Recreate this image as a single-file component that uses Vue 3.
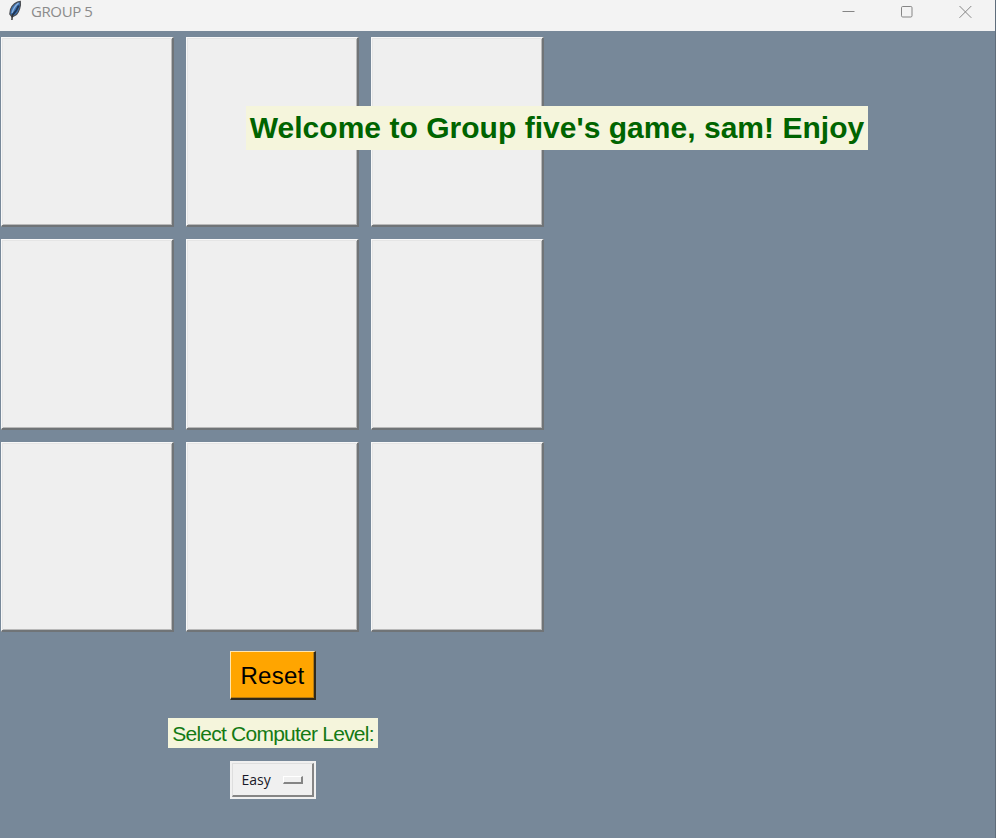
<script setup>
import { ref } from 'vue'

const cells = ref(Array(9).fill(''))
const level = ref('Easy')
const reset = () => cells.value.fill('')
</script>

<template>
  <div class="window">
    <header class="titlebar">
      <svg class="feather" width="14" height="22" viewBox="0 0 14 22">
        <path d="M12.300 1.300C8.500 1.500 4 5 2.500 9.500L1.800 14L4.100 17L8.500 14.500C11.300 11.500 13 5.500 12.300 1.300Z" fill="#3f74b5" stroke="#4a4c50" stroke-width="1.200" />
        <path d="M10.500 3C7.500 5.500 5.200 9 4 13" fill="none" stroke="#8fb4dc" stroke-width="1.300" />
        <path d="M10.800 5.500C9.500 9 7.500 12 4.500 15" fill="none" stroke="#1f3553" stroke-width="1.900" />
        <path d="M4.400 14L3.900 20" stroke="#333" stroke-width="1.400" />
      </svg>
      <span class="title">GROUP 5</span>
      <div class="controls">
        <svg width="14" height="14" viewBox="0 0 14 14"><path d="M1.500 6.500H13.500" /></svg>
        <svg width="14" height="14" viewBox="0 0 14 14"><rect x="1.500" y="1.500" width="10.500" height="10.500" rx="1.200" /></svg>
        <svg width="14" height="14" viewBox="0 0 14 14"><path d="M.5 1L12.300 12.800M12.300 1L.5 12.800" /></svg>
      </div>
    </header>
    <main class="content">
      <div class="column">
        <div class="board">
          <button v-for="(cell, i) in cells" :key="i" class="cell">{{ cell }}</button>
        </div>
        <button class="reset" @click="reset">Reset</button>
        <div class="label">Select Computer Level:</div>
        <div class="menu-ring">
          <button class="menu"><span>{{ level }}</span><i class="indicator"></i></button>
        </div>
      </div>
      <div class="welcome"><span>Welcome to Group five's game, sam! Enjoy</span></div>
    </main>
  </div>
</template>

<style>
body {
  margin: 0;
  overflow: hidden;
}
</style>

<style scoped>
.window {
  width: 996px;
  height: 838px;
  box-sizing: border-box;
  border-right: 1px solid #5f6d7b;
  background: #778899;
  font-family: "Liberation Sans", Arial, sans-serif;
  display: flex;
  flex-direction: column;
}
.titlebar {
  height: 31px;
  background: #f3f3f3;
  display: flex;
  align-items: flex-start;
}
.feather {
  margin-left: 8px;
}
.title {
  margin-left: 9px;
  font: 15px/22px "Open Sans", "Noto Sans", sans-serif;
  letter-spacing: -0.4px;
  color: #8b8b8b;
}
.controls {
  margin: 5px 22px 0 auto;
  display: flex;
  gap: 45px;
}
.controls svg {
  fill: none;
  stroke: #858585;
  stroke-width: 1;
}
.content {
  position: relative;
  flex: 1;
}
.column {
  width: 545px;
  padding-top: 6px;
  display: flex;
  flex-direction: column;
  align-items: center;
}
button {
  box-sizing: border-box;
  margin: 0;
  padding: 0;
  border-radius: 0;
  font-family: inherit;
}
.board {
  display: grid;
  grid-template-columns: repeat(3, 173px);
  grid-template-rows: 190px 191px 190px;
  gap: 12px;
}
.cell {
  background: #efefef;
  border: 1px solid #f8f8f8;
  border-right: 2px solid #707477;
  border-bottom: 2px solid #707477;
  box-shadow: inset 1px 1px #e5e5e5, inset -1px -1px #b9b9b9;
}
.reset {
  width: 86px;
  height: 49px;
  margin-top: 19px;
  padding: 1px 0 0 1px;
  background: #ffa500;
  border: 1px solid #ffe6ae;
  border-right: 2px solid #30291b;
  border-bottom: 2px solid #30291b;
  box-shadow: inset -1px -1px #b97d10;
  font-size: 24px;
  letter-spacing: 0.25px;
  color: #000;
}
.label {
  box-sizing: border-box;
  width: 210px;
  height: 30px;
  margin: 18px 0 0 1px;
  background: #f5f5dc;
  color: #147a14;
  font-size: 21px;
  line-height: 31px;
  letter-spacing: -0.76px;
  text-align: center;
  white-space: nowrap;
}
.menu-ring {
  margin-top: 13px;
  padding: 2px;
  background: #f0f0f0;
}
.menu {
  width: 82px;
  height: 34px;
  display: flex;
  align-items: center;
  justify-content: space-between;
  padding: 0 9px;
  background: #f0f0f0;
  border: 1px solid #dedede;
  border-right: 2px solid #858585;
  border-bottom: 2px solid #858585;
  font: 14px "Open Sans", "Noto Sans", sans-serif;
  color: #181828;
}
.indicator {
  box-sizing: border-box;
  width: 20px;
  height: 8px;
  border: 1px solid #fff;
  border-right: 2px solid #858585;
  border-bottom: 2px solid #858585;
}
.welcome {
  position: absolute;
  left: 246px;
  top: 75px;
  width: 622px;
  height: 44px;
  background: #f5f5dc;
  color: #006400;
  font-size: 30px;
  font-weight: bold;
  line-height: 44px;
  letter-spacing: 0.03px;
  text-align: center;
  white-space: nowrap;
}
</style>
